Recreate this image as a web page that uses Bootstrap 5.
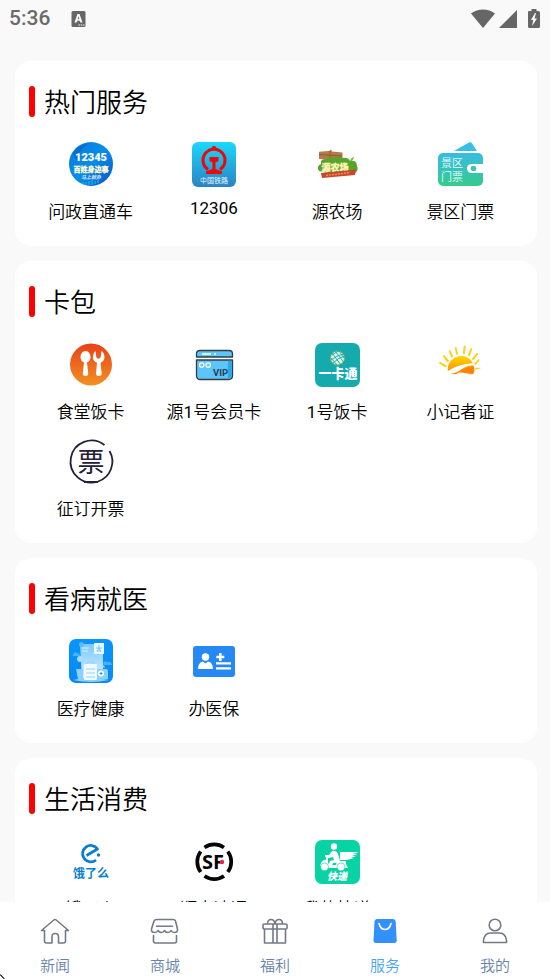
<!DOCTYPE html>
<html lang="zh-CN">
<head>
<meta charset="utf-8">
<meta name="viewport" content="width=device-width, initial-scale=1">
<title>服务</title>
<link rel="stylesheet" href="https://cdn.jsdelivr.net/npm/bootstrap@5.3.0/dist/css/bootstrap.min.css">
<style>
body{font-family:Roboto,"Noto Sans CJK SC",sans-serif;background:#f9f9f9;color:#000}
.status-bar{height:38px;padding:0 10px 0 9px;color:#6a6a6a;font-size:21px;font-weight:500}
.service-list{padding:23px 13px 0 15px;scrollbar-width:none}
.service-list::-webkit-scrollbar{display:none}
.service-card{--bs-card-border-radius:16px;padding:25px 15px 7px 14px;margin-bottom:15px}
.section-title{height:31px;font-size:26px;line-height:35px;font-weight:350;margin:0 0 25px;gap:9px}
.section-title::before{content:"";width:6px;height:31px;border-radius:3px;background:#f00}
.service{height:97px;gap:12px;font-size:17px;font-weight:350;line-height:normal;color:#000;white-space:nowrap}
.service svg{width:44px;height:44px;flex:none;overflow:visible}
.tab-bar{height:77px}
.tab{padding-top:14px;gap:9px;font-size:15px;line-height:22px;font-weight:350;color:#6683aa}
.tab.active{color:#4ba3f5}
.tab svg{width:30px;height:30px;fill:none;stroke:#737985;stroke-width:1.6;stroke-linejoin:round;stroke-linecap:round}
.pointer-tip{width:5px;height:5px}
svg text{font-family:Roboto,"Noto Sans CJK SC",sans-serif;text-anchor:middle}
svg .sf-letters{font-family:"Open Sans",sans-serif}
</style>
<script src="https://cdn.jsdelivr.net/npm/bootstrap@5.3.0/dist/js/bootstrap.bundle.min.js"></script>
</head>
<body class="vh-100 d-flex flex-column overflow-hidden">
<header class="status-bar d-flex align-items-center flex-shrink-0">
  <span>5:36</span>
  <svg class="ms-3 ps-1" width="20" height="16" viewBox="-1 0 15 16" aria-hidden="true"><rect width="14" height="16" rx="1.5" fill="#666"/><path d="M3 11.500 6 3h2l3 8.500H8.900l-.5-1.700H5.600l-.5 1.700zM6.100 8.200h1.800L7 5.200z" fill="#fff"/><path d="M7 14h6" stroke="#fff" stroke-dasharray="1.500 .7"/></svg>
  <svg class="ms-auto" width="70" height="22" viewBox="0 0 70 22" fill="#666" aria-hidden="true"><path d="M1 5.500C8 .2 18 .2 25 5.500L13 20z"/><path d="M47 2v18H29z"/><path d="M58.500 3h3V1h5v2h2q1.500 0 1.500 1.500v14q0 1.500-1.500 1.500h-9q-1.500 0-1.500-1.500v-14Q58 3 58.500 3z"/><path d="m65 5-4 7h2.300L62 18l5-7.500h-2.500L66 5z" fill="#fff"/></svg>
</header>

<main class="service-list flex-grow-1 overflow-auto">
  <section class="card service-card border-0">
    <h2 class="section-title d-flex align-items-start">热门服务</h2>
    <div class="row row-cols-4 g-0">
      <a href="#" class="service col d-flex flex-column align-items-center text-decoration-none">
        <svg viewBox="0 0 44 44"><defs><linearGradient id="hotline" x2="1" y2="1"><stop stop-color="#087ad8"/><stop offset=".5" stop-color="#078ee8"/><stop offset="1" stop-color="#0754ca"/></linearGradient></defs><circle cx="22" cy="22" r="22" fill="url(#hotline)"/><path d="M4 12Q8 3 20 1 9 9 8 19z" fill="#0a55c5" opacity=".5"/><text x="22" y="19" font-size="11" font-weight="900" fill="#fff">12345</text><text x="22" y="29.500" font-size="7" font-weight="900" fill="#fffbd0" stroke="#fffbd0" stroke-width=".3">百姓身边事</text><text x="22" y="37" font-size="5" font-weight="700" font-style="italic" fill="#e3ecff">马上就办</text><path d="M14 42v-2m3 3v-3m3 3v-4m3 4v-5m3 4v-3m3 2v-3" stroke="#12c7ef"/></svg>
        <span>问政直通车</span></a>
      <a href="#" class="service col d-flex flex-column align-items-center text-decoration-none">
        <svg viewBox="0 0 44 44"><defs><linearGradient id="rail" x2="0" y2="1"><stop stop-color="#1bd8fc"/><stop offset="1" stop-color="#2b83c3"/></linearGradient></defs><rect width="44" height="45" rx="6" fill="url(#rail)"/><path d="M16 27.500a11 11 0 1 1 12 0" fill="none" stroke="#f00606" stroke-width="3"/><path d="M19.500 7Q19.500 4 22 4t2.500 3zM17.500 15h9v4l-3 1.500V27l6.500 2.500V32H14v-2.500l6.500-2.500v-6.500l-3-1.500z" fill="#f00606"/><text x="22" y="40.500" font-size="7" font-weight="400" fill="#eaf7ff">中国铁路</text></svg>
        <span class="fw-normal">12306</span></a>
      <a href="#" class="service col d-flex flex-column align-items-center text-decoration-none">
        <svg viewBox="0 0 44 44"><path d="m14 9 2-1.500 1 2 10.500 1v8L4 17V9.800z" fill="#b77948"/><path d="M4 12.500 27 14M15 9v9" stroke="#8a5028" stroke-width=".8"/><path d="M4 29q-3-5 2-7-1-5 5-5 3-3 7-1 5-3 10 0 5-1 7 3 7-1 7 5 2 4-2 7L22 33z" fill="#57a52c"/><path d="M35 20q0-4 4-5-1 4-4 5" fill="#71b830"/><text x="20" y="28.500" font-size="9" font-weight="900" fill="#fff5b8" stroke="#fff5b8" stroke-width=".3">源农场</text><path d="m6 31 31-3 4-1-1 6-33 3z" fill="#c9472d"/><path d="m11 33.500 24-3" stroke="#f08d62" stroke-width="1.500" stroke-dasharray="2 1"/></svg>
        <span>源农场</span></a>
      <a href="#" class="service col d-flex flex-column align-items-center text-decoration-none">
        <svg viewBox="0 0 44 44"><defs><linearGradient id="wallet" x2="0" y2="1"><stop stop-color="#37bce4"/><stop offset="1" stop-color="#37ca8e"/></linearGradient></defs><path d="M16 9 31 .5q2-1 3 1L39 9z" fill="#38beeb"/><rect y="11" width="45" height="33" rx="5" fill="url(#wallet)"/><path d="M45 22H33.500a4.500 4.500 0 0 0 0 9H45z" fill="#fff"/><circle cx="35.500" cy="26.500" r="2.800" fill="#38c6b5"/><text x="14" y="24.500" font-size="11" fill="#eafffb">景区</text><text x="14" y="38.500" font-size="11" fill="#eafffb">门票</text></svg>
        <span>景区门票</span></a>
    </div>
  </section>

  <section class="card service-card border-0">
    <h2 class="section-title d-flex align-items-start">卡包</h2>
    <div class="row row-cols-4 g-0">
      <a href="#" class="service col d-flex flex-column align-items-center text-decoration-none">
        <svg viewBox="0 0 44 44"><defs><linearGradient id="canteen" x2="0" y2="1"><stop stop-color="#e8401a"/><stop offset="1" stop-color="#f29122"/></linearGradient></defs><circle cx="22" cy="22.500" r="21" fill="url(#canteen)"/><path d="M16.500 9c3 0 5 3 5 6 0 2.800-1.400 4.600-3.500 5.500l1.200 11q0 2.500-2.700 2.500t-2.700-2.500l1.200-11c-2.100-.9-3.500-2.700-3.500-5.500 0-3 2-6 5-6zM26.500 9l.8 6 1 1.500h2.400l1-1.500.8-6c2 1 3 4 3 6.500 0 2.600-1.800 4.500-4 5.300l1.200 10.700q0 2.500-2.900 2.500T27 31.500l1-10.700c-2.400-.8-4-2.700-4-5.300 0-2.500.8-5.500 2.500-6.500z" fill="#fff"/></svg>
        <span>食堂饭卡</span></a>
      <a href="#" class="service col d-flex flex-column align-items-center text-decoration-none">
        <svg viewBox="0 -1 44 44"><g fill="#5bc5fc" stroke="#343c43" stroke-width="1.300" stroke-linejoin="round"><path d="M4.500 14v-3q0-3.500 3.500-3.500h29q3.500 0 3.500 3.500v3zM4.500 17h36v15.500q0 4-4 4h-28q-4 0-4-4z"/></g><path d="M36 17.800h3.700V32q0 3.500-3.700 3.800z" fill="#24aaf0"/><path d="M10 11h9m3 0h2" stroke="#fff" stroke-width="1.300"/><g fill="none" stroke="#fff" stroke-width="1.300"><circle cx="9.700" cy="22" r="2.200"/><circle cx="16.200" cy="22" r="2.200"/></g><text x="28.500" y="33" font-size="9.500" font-weight="700" fill="#2c3e50">VIP</text></svg>
        <span>源<span class="fw-normal">1</span>号会员卡</span></a>
      <a href="#" class="service col d-flex flex-column align-items-center text-decoration-none">
        <svg viewBox="0 -1 44 44"><rect width="45" height="44" rx="7" fill="#14aaae"/><circle cx="22.500" cy="15" r="7" fill="#dcf5e8" stroke="#a1a957"/><path d="m17 10 9 12m-6-14 8.500 11M16 15l6 7m2-14 5 7m-13 2q6-5 13-6m-11 9q6-6 12-7m-13-1 8-5" fill="none" stroke="#14aaae" stroke-width=".9"/><text x="23" y="35" font-size="13" font-weight="900" fill="#fff">一卡通</text></svg>
        <span><span class="fw-normal">1</span>号饭卡</span></a>
      <a href="#" class="service col d-flex flex-column align-items-center text-decoration-none">
        <svg viewBox="0 0 44 44"><defs><linearGradient id="sun" x2="0" y2="1"><stop stop-color="#ffd900"/><stop offset="1" stop-color="#ff8500"/></linearGradient></defs><path d="M10.500 31Q8 24 13 18.500 18 13.500 24 14q7 .5 10.500 6.500 2 4 1.500 8.500l-3 3.500q-8-4-14-1-2 2-8.500-1z" fill="url(#sun)"/><path d="M10 29q10-7 26-8l1 2q-9 0-16 6-5 3-11 3z" fill="#fff"/><path d="M21 30q5-5 14-5.500 3 2 0 8l-2-2-3 1z" fill="#ff8106"/><g fill="#f9cf12" stroke="#f9cf12" stroke-width=".4"><path d="m9 24-7-4-1 1 6 4zM11 19l-5-6-1 1 4 6zM15 14.500 12 8l-1 1 2.500 6.500zM20 12l-2-7-1 1 1.500 6.500zM25 11.500 26 4l1.500 0L26.500 12zM30 13l3-7 1 1-2.500 7zM34 17l5-6 1 1-4.500 6zM36.500 21.500 41 17l0 2-4 4zM37.500 26h5l-5 1.500z"/></g></svg>
        <span>小记者证</span></a>
      <a href="#" class="service col d-flex flex-column align-items-center text-decoration-none">
        <svg viewBox="0 -1 44 44"><path d="M35.500 5A21 21 0 1 0 29 41.500M40.500 11A21 21 0 0 1 29 41.500M15 42h14" fill="none" stroke="#23213a" stroke-width="1.800"/><text x="22" y="32" font-size="27" font-weight="400" fill="#23213a">票</text></svg>
        <span>征订开票</span></a>
    </div>
  </section>

  <section class="card service-card border-0">
    <h2 class="section-title d-flex align-items-start">看病就医</h2>
    <div class="row row-cols-4 g-0">
      <a href="#" class="service col d-flex flex-column align-items-center text-decoration-none">
        <svg viewBox="0 0 44 44"><defs><linearGradient id="health" x2="0" y2="1"><stop stop-color="#0895fc"/><stop offset="1" stop-color="#0689f5"/></linearGradient><linearGradient id="report" x2="0" y2="1"><stop stop-color="#7bcaff"/><stop offset="1" stop-color="#d4efff"/></linearGradient></defs><rect width="44" height="44" rx="7" fill="url(#health)"/><path d="M11 5h17v5h6v29H13z" fill="url(#report)"/><path d="M4 16q1-4 4-2 3 0 3 3H4m30 8q1-4 4-2 4-1 5 3h-8" fill="#47b0ff"/><circle cx="11" cy="20" r="3" fill="#a9dcff"/><circle cx="12.500" cy="5.500" r="2.500" fill="#58baff"/><rect x="25" y="4" width="10" height="11" fill="#eaf8ff"/><path d="M13 9h7m-7 3h6" stroke="#d9f1ff"/><path d="M30 6v7m-3-4h6m-5 4 2-4 2 4" fill="none" stroke="#7bc6ff"/><path d="M4 41q18-5 36 0-18 4-36 0M7 30h7v10H9zM28 30h9q2 0 2 2v8H27z" fill="#8bd0ff"/><rect x="15" y="25" width="13" height="16" rx="1" fill="#f1faff"/><path d="M18 25v-2h7v2m-8 5h9m-9 4h9m-9 4h9" fill="none" stroke="#93d3ff"/><path d="M30 29v-2h5v2" fill="none" stroke="#b9e3ff"/><circle cx="32" cy="34.500" r="3" fill="#fff"/><path d="M32 33v3m-1.500-1.500h3" stroke="#1d98f6"/></svg>
        <span>医疗健康</span></a>
      <a href="#" class="service col d-flex flex-column align-items-center text-decoration-none">
        <svg viewBox="0 0 44 44"><rect x="1" y="7" width="42" height="31" rx="3" fill="#2688f5"/><g fill="#fff"><circle cx="13.500" cy="18" r="3.700"/><path d="M6 30q0-6.500 5-7.500l2.500 2 2.500-2q5 1 5 7.500zM27 14h2.600v2.700h2.700v2.600h-2.700V22H27v-2.700h-2.700v-2.600H27zM24 23.200h15v2.400H24zM24 28.200h15v2.400H24z"/></g></svg>
        <span>办医保</span></a>
    </div>
  </section>

  <section class="card service-card border-0">
    <h2 class="section-title d-flex align-items-start">生活消费</h2>
    <div class="row row-cols-4 g-0">
      <a href="#" class="service col d-flex flex-column align-items-center text-decoration-none">
        <svg viewBox="0 -1 44 44"><path d="M27 20A8.200 8.200 0 1 1 28.500 9L17.500 15.500" fill="none" stroke="#0b7fce" stroke-width="2.800" stroke-linejoin="round"/><circle cx="29.500" cy="15" r="1.700" fill="#0b7fce"/><text x="22" y="37.500" font-size="12" font-weight="700" fill="#0b7fce">饿了么</text></svg>
        <span>饿了么</span></a>
      <a href="#" class="service col d-flex flex-column align-items-center text-decoration-none">
        <svg viewBox="0 -1 44 44"><path d="M12.500 7.500a17 17 0 0 1 19.500 0M35.800 11.500a17 17 0 0 1 0 20.500M32 36a17 17 0 0 1-19.500 0M8.700 32a17 17 0 0 1 0-20.500" fill="none" stroke="#050505" stroke-width="3.700"/><text class="sf-letters" x="21" y="29" font-size="20" font-weight="700" fill="#050505">SF</text><circle cx="30" cy="22" r="2.200" fill="#ef2047"/></svg>
        <span>顺丰速运</span></a>
      <a href="#" class="service col d-flex flex-column align-items-center text-decoration-none">
        <svg viewBox="0 -1 44 44"><rect width="45" height="44" rx="7" fill="#08d3a5"/><g fill="#fff"><circle cx="19" cy="6.500" r="3.200"/><path d="M17 11q4-1 6 3l2 7q0 2-3 2h-4l-2 5h-4l3-7 4-1-1-3-4 1-4-1v-2l4 0zM25 12h19l-6 2h5l-6 2h4l-5 2h3l-7 2H25zM22 21h9v3l2 4H14l1-3h6zM6 23q2-4 6-3l3 7h-3q-3-3-7-1zM11 15l2 0 0 8h-2z"/><circle cx="9.500" cy="27" r="3.800"/><circle cx="26" cy="27" r="3.800"/></g><g fill="none" stroke="#08d3a5" stroke-width=".6"><circle cx="9.500" cy="27" r="4"/><circle cx="26" cy="27" r="4"/></g><text x="22" y="40" font-size="10" font-weight="900" font-style="italic" fill="#fff">快递</text></svg>
        <span>我的快递</span></a>
    </div>
  </section>
</main>

<nav class="tab-bar d-flex bg-white flex-shrink-0">
  <a href="#" class="tab d-flex flex-column align-items-center flex-fill w-100 text-decoration-none"><svg viewBox="0 0 30 30"><path d="m1.500 14.500 12.300-10.500q1.200-1 2.400 0l12.300 10.500h-3V25q0 2-2 2H18.500v-6.500q0-3-3.300-3t-3.200 3V27H6.500q-2 0-2-2V14.500z"/></svg>新闻</a>
  <a href="#" class="tab d-flex flex-column align-items-center flex-fill w-100 text-decoration-none"><svg viewBox="0 0 30 30"><path d="M7 3.500h16q2 0 2.500 1.500l2 8q.5 3.500-3 3.500-2.500 0-3.500-2-1 2-3.200 2t-3.300-2q-1 2-3.200 2T8 14.500q-1 2-3.500 2-3.500 0-3-3.500l2.500-8q.6-1.500 3-1.500zM6.500 10.300h16M3.500 19.500V25q0 2 2 2h19q2 0 2-2v-5.500"/></svg>商城</a>
  <a href="#" class="tab d-flex flex-column align-items-center flex-fill w-100 text-decoration-none"><svg viewBox="0 0 30 30"><path d="M4 8h22q1 0 1 1v3q0 1-1 1H4q-1 0-1-1V9q0-1 1-1zM4.500 13v14h21V13M13 8v19m4-19v19M7.500 8q0-4.500 3.500-4.500 3.500 0 4 4.500.5-4.500 4-4.500t3.500 4.500"/></svg>福利</a>
  <a href="#" class="tab active d-flex flex-column align-items-center flex-fill w-100 text-decoration-none" aria-current="page"><svg viewBox="0 0 30 30"><path d="M7 3h16q2.500 0 2.700 2.500l1 19q0 2.500-2.500 2.500H6q-2.500 0-2.500-2.500l1-19Q4.700 3 7 3z" fill="#3291ff" stroke="none"/><path d="M9 7.500q1.500 6 6 6t6-6" stroke="#fff" stroke-width="1.600"/></svg>服务</a>
  <a href="#" class="tab d-flex flex-column align-items-center flex-fill w-100 text-decoration-none"><svg viewBox="0 0 30 30"><circle cx="15" cy="9" r="5.800"/><path d="M3.500 26.500v-2q1-7.500 7-7.500h9q6 0 7 7.500v2z"/></svg>我的</a>
</nav>
<svg class="pointer-tip position-fixed bottom-0 start-0" viewBox="0 0 5 5" aria-hidden="true"><path d="M0 1h1v1h1v1h1v1h1v1" fill="none" stroke="#111"/></svg>
</body>
</html>
